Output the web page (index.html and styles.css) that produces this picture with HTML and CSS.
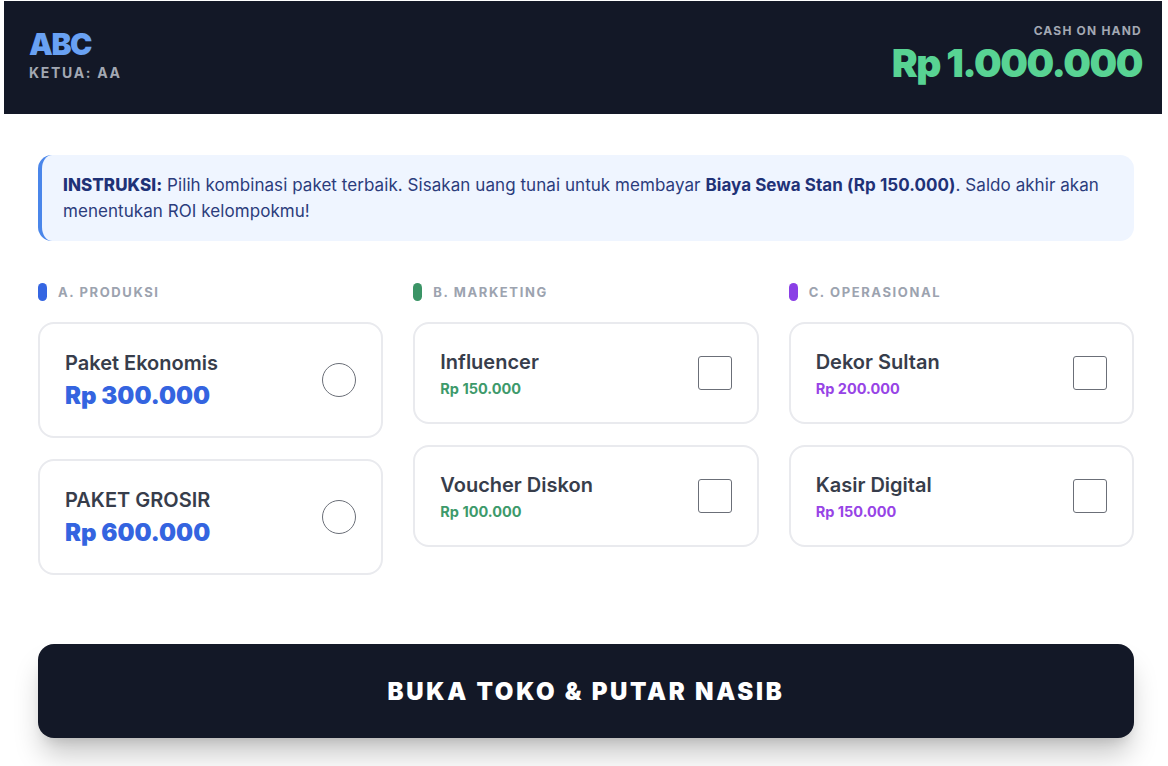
FILE: index.html
```html
<!DOCTYPE html>
<html lang="id">
<head>
<meta charset="utf-8">
<title>Buka Toko</title>
<link rel="stylesheet" href="styles.css">
</head>
<body>
<div class="app">
  <header class="topbar">
    <div class="team">
      <div class="team-name">ABC</div>
      <div class="leader">KETUA: AA</div>
    </div>
    <div class="cash">
      <div class="cash-label">CASH ON HAND</div>
      <div class="cash-value">Rp 1.000.000</div>
    </div>
  </header>

  <main class="content">
    <p class="notice"><strong>INSTRUKSI:</strong> Pilih kombinasi paket terbaik. Sisakan uang tunai untuk membayar <b>Biaya Sewa Stan (Rp 150.000)</b>. Saldo akhir akan menentukan ROI kelompokmu!</p>

    <div class="columns">
      <section class="col">
        <h3 class="col-title"><span class="pill pill-blue"></span>A. PRODUKSI</h3>
        <div class="card card-big">
          <div class="card-text">
            <div class="card-name">Paket Ekonomis</div>
            <div class="price-big">Rp 300.000</div>
          </div>
          <span class="radio"></span>
        </div>
        <div class="card card-big">
          <div class="card-text">
            <div class="card-name">PAKET GROSIR</div>
            <div class="price-big">Rp 600.000</div>
          </div>
          <span class="radio"></span>
        </div>
      </section>

      <section class="col">
        <h3 class="col-title"><span class="pill pill-green"></span>B. MARKETING</h3>
        <div class="card card-small">
          <div class="card-text">
            <div class="card-name">Influencer</div>
            <div class="price-small green">Rp 150.000</div>
          </div>
          <span class="checkbox"></span>
        </div>
        <div class="card card-small">
          <div class="card-text">
            <div class="card-name">Voucher Diskon</div>
            <div class="price-small green">Rp 100.000</div>
          </div>
          <span class="checkbox"></span>
        </div>
      </section>

      <section class="col">
        <h3 class="col-title"><span class="pill pill-purple"></span>C. OPERASIONAL</h3>
        <div class="card card-small">
          <div class="card-text">
            <div class="card-name">Dekor Sultan</div>
            <div class="price-small purple">Rp 200.000</div>
          </div>
          <span class="checkbox"></span>
        </div>
        <div class="card card-small">
          <div class="card-text">
            <div class="card-name">Kasir Digital</div>
            <div class="price-small purple">Rp 150.000</div>
          </div>
          <span class="checkbox"></span>
        </div>
      </section>
    </div>

    <button class="cta" type="button">BUKA TOKO &amp; PUTAR NASIB</button>
  </main>
</div>
</body>
</html>
```

FILE: styles.css
```css
* { box-sizing: border-box; }

html, body {
  margin: 0;
  padding: 0;
  background: #ffffff;
}

body {
  font-family: Inter, "Noto Sans", "Liberation Sans", sans-serif;
  color: #374151;
  min-height: 766px;
}

.app {
  padding-top: 1px;
  padding-bottom: 40px;
  width: 1168px;
}

/* ---------- Header ---------- */
.topbar {
  margin-left: 4px;
  width: 1158px;
  height: 113px;
  background: #131827;
  display: flex;
  justify-content: space-between;
  align-items: flex-start;
  padding: 23px 20px 0 25px;
}

.team { margin-top: 2px; }

.team-name {
  font-size: 30px;
  line-height: 36px;
  font-weight: 900;
  letter-spacing: -1.4px;
  color: #69a1f3;
}

.leader {
  margin-top: 2px;
  font-size: 14px;
  line-height: 18px;
  font-weight: 700;
  letter-spacing: 1.7px;
  color: #a3a8b3;
}

.cash { text-align: right; }

.cash-label {
  font-size: 12px;
  line-height: 14px;
  font-weight: 700;
  letter-spacing: 1.2px;
  color: #a3a8b3;
}

.cash-value {
  margin-top: 1px;
  font-size: 39px;
  line-height: 48px;
  font-weight: 900;
  letter-spacing: -1.5px;
  color: #58d393;
}

/* ---------- Content ---------- */
.content {
  margin-left: 38px;
  width: 1096px;
  padding-top: 41px;
}

.notice {
  margin: 0;
  background: #eff5ff;
  border-left: 4px solid #4a86ea;
  border-radius: 14px;
  padding: 17px 24px 17px 21px;
  font-size: 17px;
  line-height: 26px;
  letter-spacing: 0.06px;
  color: #2b3c7c;
}

.notice strong {
  font-weight: 800;
  color: #1f3277;
}

.notice b {
  font-weight: 700;
  color: #1f3277;
}

/* ---------- Columns ---------- */
.columns {
  margin-top: 42px;
  display: grid;
  grid-template-columns: repeat(3, 1fr);
  column-gap: 30px;
  align-items: start;
}

.col {
  display: flex;
  flex-direction: column;
  gap: 21px;
}

.col-title {
  margin: 0;
  height: 18px;
  display: flex;
  align-items: center;
  gap: 11px;
  font-size: 13px;
  font-weight: 700;
  letter-spacing: 1.6px;
  color: #9ca3af;
}

.pill {
  width: 9px;
  height: 18px;
  border-radius: 5px;
  flex: none;
}
.pill-blue { background: #3566e2; }
.pill-green { background: #3b9466; }
.pill-purple { background: #8a3fe6; }

.card {
  border: 2px solid #e9eaee;
  border-radius: 16px;
  background: #ffffff;
  display: flex;
  justify-content: space-between;
  align-items: center;
  padding: 0 25px;
}

.card-big { height: 116px; }
.card-small { height: 102px; }

.card-text { margin-top: 3px; }
.card-small .card-text { margin-top: 2px; }

.card-name {
  font-size: 20px;
  line-height: 26px;
  font-weight: 600;
  color: #373d4b;
}

.price-big {
  margin-top: 3px;
  font-size: 24px;
  line-height: 34px;
  font-weight: 900;
  color: #3464e0;
}

.price-small {
  margin-top: 3px;
  font-size: 14.5px;
  line-height: 21px;
  font-weight: 700;
}
.green { color: #3d9a6b; }
.purple { color: #9744e6; }

.radio {
  width: 34px;
  height: 34px;
  border: 1.5px solid #6b6f78;
  border-radius: 50%;
  flex: none;
}

.checkbox {
  width: 34px;
  height: 34px;
  border: 1.5px solid #6b6f78;
  border-radius: 3px;
  flex: none;
}

/* ---------- CTA ---------- */
.cta {
  display: block;
  margin-top: 69px;
  width: 1096px;
  height: 94px;
  border: none;
  border-radius: 16px;
  background: #131827;
  color: #ffffff;
  font-family: Inter, "Noto Sans", sans-serif;
  font-size: 24px;
  font-weight: 900;
  letter-spacing: 2.7px;
  box-shadow: 0 20px 28px -4px rgba(0, 0, 0, 0.22), 0 8px 12px -6px rgba(0, 0, 0, 0.12);
  cursor: pointer;
}
```
